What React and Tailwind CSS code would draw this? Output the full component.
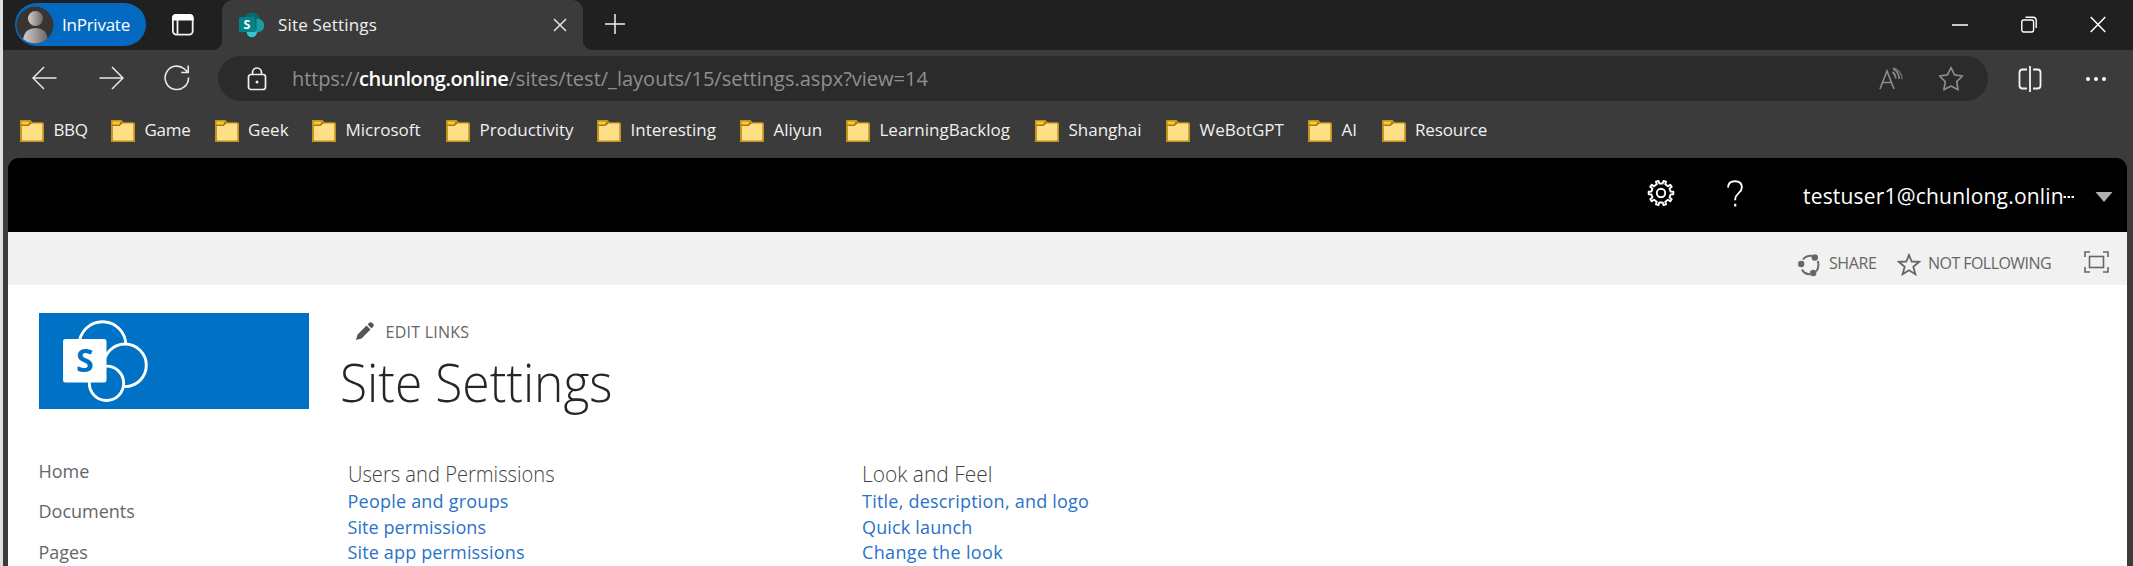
import React from "react";

function Folder() {
  return (
    <svg width="24" height="22" viewBox="0 0 24 22" className="shrink-0">
      <path d="M.7.7h9.600l1.700 2.300h10.300q1 0 1 1v17.300H.7z" fill="#a87a10" stroke="#c4931c" strokeWidth="1.400" />
      <path d="M1.500 1.500h8.200l-1.600 3H1.500z" fill="#f8cb35" />
      <path d="M1.800 6h6.700l3-2.400h10.300q.6 0 .6.600v15.600q0 .6-.6.6h-19.400q-.6 0-.6-.6z" fill="#ffdf85" />
    </svg>
  );
}

function InPrivatePill() {
  return (
    <div className="mt-[3px] ml-[12px] flex h-[43px] w-[131px] items-center rounded-full bg-[#0469c1] pl-px">
      <svg width="38" height="38" viewBox="0 0 38 38" className="shrink-0">
        <defs>
          <linearGradient id="person" x1="0" x2="1" y1="0" y2="0">
            <stop offset="0" stopColor="#d3cfcc" />
            <stop offset="1" stopColor="#6b6664" />
          </linearGradient>
          <clipPath id="avatar">
            <circle cx="19" cy="19" r="18.500" />
          </clipPath>
        </defs>
        <circle cx="19" cy="19" r="18.500" fill="#373432" />
        <g clipPath="url(#avatar)" fill="url(#person)">
          <circle cx="19.500" cy="12.500" r="7.500" />
          <path d="M7 38V33q2-11 12.500-11T32 33v5z" />
        </g>
      </svg>
      <span className="ml-[8px] text-[17px] leading-[22px] font-medium tracking-[-0.25px] text-white">InPrivate</span>
    </div>
  );
}

function TabBar() {
  return (
    <div className="flex h-[50px] shrink-0 bg-[#202020]">
      <InPrivatePill />
      <svg width="24" height="24" viewBox="0 0 24 24" className="mt-[13px] ml-[25px] shrink-0" fill="none" stroke="#f2f2f2" strokeWidth="1.800">
        <rect x="1.900" y="2" width="19.800" height="19.600" rx="3.500" />
        <path d="M1 7.500V5q0-4 4-4h13.600q4 0 4 4v2.500z" fill="#fff" stroke="none" />
        <path d="M6.500 7v14" />
      </svg>
      <div className="ml-[18px] flex w-[9px] items-end bg-[#3b3b3b]">
        <div className="h-full w-full rounded-br-[9px] bg-[#202020]" />
      </div>
      <div className="flex w-[361px] items-center rounded-t-[11px] bg-[#3b3b3b] pl-[17px]">
        <svg width="26" height="26" viewBox="0 0 26 26" className="shrink-0">
          <circle cx="13" cy="8.500" r="8" fill="#036c70" />
          <circle cx="18.500" cy="13.500" r="6.800" fill="#1a9ba1" />
          <circle cx="12.800" cy="20" r="5.200" fill="#37c6d0" />
          <path d="M8 6h9.500v13.500H8z" fill="#024a4d" opacity=".6" />
          <rect x="0" y="5" width="16" height="15" rx="1.300" fill="#038387" />
          <text x="8" y="17" textAnchor="middle" fontSize="12.500" fontWeight="700" fontFamily="Open Sans, sans-serif" fill="#fff">S</text>
        </svg>
        <span className="-mt-px ml-[13px] w-[262px] text-[17px] leading-[22px] tracking-[0.18px] text-[#f0f0f0]">Site Settings</span>
        <svg width="14" height="14" viewBox="0 0 14 14" className="ml-[13px] shrink-0" stroke="#e4e4e4" strokeWidth="1.500">
          <path d="M1 1l12 12M13 1L1 13" />
        </svg>
      </div>
      <div className="flex w-[9px] bg-[#3b3b3b]">
        <div className="h-full w-full rounded-bl-[9px] bg-[#202020]" />
      </div>
      <svg width="22" height="22" viewBox="0 0 22 22" className="mt-[13px] ml-[12px] shrink-0" stroke="#f0f0f0" strokeWidth="1.500">
        <path d="M11 1v20M1 11h20" />
      </svg>
      <div className="mt-[16px] ml-auto flex gap-[53px] pr-[27px]">
        <svg width="16" height="17" viewBox="0 0 16 17" stroke="#fff" strokeWidth="1.500">
          <path d="M0 9h16" />
        </svg>
        <svg width="16" height="17" viewBox="0 0 16 17" fill="none" stroke="#fff" strokeWidth="1.400">
          <rect x=".8" y="4" width="11.800" height="12" rx="2" />
          <path d="M4.500 1.300H12q3.200 0 3.200 3.200V12" />
        </svg>
        <svg width="16" height="17" viewBox="0 0 16 17" stroke="#fff" strokeWidth="1.500">
          <path d="M.7 1l14.600 15M15.300 1L.7 16" />
        </svg>
      </div>
    </div>
  );
}

function AddressRow() {
  return (
    <div className="flex h-[57px] shrink-0 items-center">
      <div className="ml-[29px] flex gap-[42px] text-[#e8e8e8]">
        <svg width="25" height="24" viewBox="0 0 25 24" fill="none" stroke="currentColor" strokeWidth="1.500">
          <path d="M24.500 12H1M12 1L1 12l11 11" />
        </svg>
        <svg width="25" height="24" viewBox="0 0 25 24" fill="none" stroke="currentColor" strokeWidth="1.500">
          <path d="M.5 12H24M13 1l11 11-11 11" />
        </svg>
        <svg width="26" height="26" viewBox="0 0 26 26" className="-ml-[2px] -mt-px" fill="none" stroke="currentColor" strokeWidth="1.600">
          <path d="M24.500 12.500A11.700 11.700 0 1 1 20.500 4L24 7.300M24.200 .5v7h-7" />
        </svg>
      </div>
      <div className="ml-[28px] flex h-[45px] w-[1770px] items-center rounded-full bg-[#2b2b2b]">
        <svg width="20" height="24" viewBox="0 0 20 24" className="ml-[29px] shrink-0" fill="none" stroke="#f0f0f0" strokeWidth="1.700">
          <rect x="1.500" y="7.500" width="17" height="15" rx="2.500" />
          <path d="M5.500 8V5.500a4.500 4.500 0 0 1 9 0V8" />
          <circle cx="10" cy="15" r="1.500" fill="#f0f0f0" stroke="none" />
        </svg>
        <div className="ml-[25px] flex text-[20px] leading-[26px] text-[#8f8f8f]">
          <span className="w-[67px] tracking-[-0.1px]">https://</span>
          <span className="w-[149.500px] font-semibold tracking-[-0.4px] text-white">chunlong.online</span>
          <span className="tracking-[0.01px]">/sites/test/_layouts/15/settings.aspx?view=14</span>
        </div>
        <svg width="24" height="23" viewBox="0 0 24 23" className="ml-auto shrink-0" fill="none" stroke="#8c8c8c" strokeWidth="1.600">
          <path d="M1 22L8 4l7 18M3.500 15.500h9" />
          <path d="M13.500 5q3 2 3.300 6.500M14 1.500q5.800 3 6.300 10.500" />
          <path d="M14.500.8q8 3 8.600 11.500" opacity=".6" />
        </svg>
        <svg width="26" height="25" viewBox="0 0 26 25" className="mr-[24px] ml-[35px] shrink-0" fill="none" stroke="#8c8c8c" strokeWidth="1.700" strokeLinejoin="round">
          <path d="M13 1.500l3.500 7.400 8 1.100-5.800 5.700 1.400 8.100L13 20l-7.100 3.800 1.400-8.100L1.500 10l8-1.100z" />
        </svg>
      </div>
      <svg width="24" height="26" viewBox="0 0 24 26" className="ml-[30px] shrink-0" fill="none" stroke="#f4f4f4" strokeWidth="1.800">
        <path d="M9 3.500H4.500q-3 0-3 3v13q0 3 3 3H9M15 3.500h4.500q3 0 3 3v13q0 3-3 3H15M12 0v26" />
      </svg>
      <svg width="22" height="6" viewBox="0 0 22 6" className="ml-[43px] shrink-0" fill="#fff">
        <circle cx="3" cy="3" r="2" />
        <circle cx="11" cy="3" r="2" />
        <circle cx="19" cy="3" r="2" />
      </svg>
    </div>
  );
}

const bookmarks = [
  ["BBQ", "w-[91px] tracking-[-0.4px]"],
  ["Game", "w-[103.5px] tracking-[-0.25px]"],
  ["Geek", "w-[97.5px] tracking-[0.1px]"],
  ["Microsoft", "w-[134px]"],
  ["Productivity", "w-[151px]"],
  ["Interesting", "w-[143px]"],
  ["Aliyun", "w-[106px]"],
  ["LearningBacklog", "w-[189px]"],
  ["Shanghai", "w-[131px]"],
  ["WeBotGPT", "w-[142px]"],
  ["AI", "w-[73.5px]"],
  ["Resource", "w-[110px] tracking-[-0.15px]"],
];

function BookmarkBar() {
  return (
    <div className="flex h-[51px] shrink-0 pt-[13px] pl-[17px] text-[17px] leading-[22px] text-[#f0f0f0]">
      {bookmarks.map(([name, cls]) => (
        <div key={name} className={"flex shrink-0 items-start gap-[9.5px] " + cls}>
          <Folder />
          <span className="-mt-px">{name}</span>
        </div>
      ))}
    </div>
  );
}

const GEAR_TEETH = 10;
const gearPath =
  Array.from({ length: GEAR_TEETH }, (_, i) => {
    const point = (r, offset) => {
      const a = ((i + offset) * 2 * Math.PI) / GEAR_TEETH;
      return (14 + r * Math.sin(a)).toFixed(2) + " " + (14 - r * Math.cos(a)).toFixed(2);
    };
    return [point(9.7, 0.28), point(12.4, 0.33), point(12.4, 0.67), point(9.7, 0.72)]
      .map((p, j) => (i === 0 && j === 0 ? "M" : "L") + p)
      .join("");
  }).join("") + "Z";

function SuiteBar() {
  return (
    <div className="flex h-[74px] shrink-0 items-center justify-end rounded-t-[11px] bg-black text-white">
      <svg width="28" height="28" viewBox="0 0 28 28" className="-mt-[4px] shrink-0" fill="none" stroke="#fff" strokeWidth="1.900" strokeLinejoin="round">
        <path d={gearPath} />
        <circle cx="14" cy="14" r="4.200" />
      </svg>
      <svg width="16" height="27" viewBox="0 0 16 27" className="-mt-[4px] ml-[52px] shrink-0" fill="none" stroke="#fff" strokeWidth="1.900">
        <path d="M1 7.500Q1.200 1.200 8 1.200t6.900 6.100c0 5.700-6.700 6-6.700 12v1" />
        <path d="M8.200 23.800v2.700" strokeWidth="2.200" />
      </svg>
      <span className="mt-px ml-[60.500px] w-[260px] text-[21px] leading-[28px] tracking-[0.19px]">testuser1@chunlong.onlin</span>
      <svg width="12" height="4" viewBox="0 0 12 4" className="mt-[3px] shrink-0" fill="#fff">
        <path d="M.5 1h2.500v2H.5zM4.500 1H7v2H4.500zM8.500 1H11v2H8.500z" />
      </svg>
      <svg width="18" height="10" viewBox="0 0 18 10" className="mt-[4px] mr-[14px] ml-[20px] shrink-0" fill="#b0b0b0">
        <path d="M.5 0h17L9 10z" />
      </svg>
    </div>
  );
}

function RibbonRow() {
  return (
    <div className="flex h-[53px] shrink-0 items-center justify-end bg-[#f1f1f1] pt-[12px] text-[16px] leading-[22px] text-[#666]">
      <svg width="22" height="24" viewBox="0 0 22 24" className="shrink-0" fill="none" stroke="#6a6a6a" strokeWidth="2">
        <path d="M5 6.500Q8 2.500 14 2.800M19.700 8q2 5.500-1.500 10.500M12 21.300Q6 21 4 16.500" />
        <g fill="#666" stroke="none">
          <circle cx="16.800" cy="4.500" r="3.200" />
          <circle cx="3.200" cy="11" r="3.200" />
          <circle cx="15.200" cy="20" r="3.200" />
        </g>
      </svg>
      <span className="-mt-[4px] ml-[9px] w-[48px] tracking-[-0.4px]">SHARE</span>
      <svg width="24" height="23" viewBox="0 0 24 23" className="ml-[20px] shrink-0" fill="none" stroke="#666" strokeWidth="1.800">
        <path d="M12 2l2.700 6.500 7.500.3-5.900 4.900 2.100 7.500L12 17.200 5.600 21.200l2.100-7.500L1.800 8.800l7.500-.3z" />
      </svg>
      <span className="-mt-[4px] ml-[7px] w-[124px] tracking-[-0.55px]">NOT FOLLOWING</span>
      <svg width="25" height="22" viewBox="0 0 25 22" className="-mt-[6px] mr-[18px] ml-[32px] shrink-0" fill="none" stroke="#666" strokeWidth="1.600">
        <path d="M1 6V1h5M19 1h5v5M24 16v5h-5M6 21H1v-5" />
        <rect x="5.500" y="5.500" width="14" height="11" />
      </svg>
    </div>
  );
}

function SiteLogo() {
  return (
    <div className="h-[96px] w-[270px] bg-[#0072c6]">
      <svg width="110" height="96" viewBox="0 0 110 96" fill="none" stroke="#fff" strokeWidth="2.900">
        <circle cx="63.500" cy="32" r="23.300" />
        <circle cx="86" cy="52.300" r="21.300" fill="#0072c6" />
        <circle cx="67.500" cy="70.300" r="17.200" fill="#0072c6" />
        <rect x="24" y="26" width="43.500" height="43.500" rx="2.500" fill="#fff" stroke="none" />
        <text x="45.700" y="59.300" textAnchor="middle" fontSize="32" fontWeight="700" fontFamily="Open Sans, sans-serif" fill="#0072c6" stroke="none">S</text>
      </svg>
    </div>
  );
}

function LinkGroup({ title, links, titleClass }) {
  return (
    <section>
      <h2 className={"w-max origin-left text-[22.5px] leading-[30px] font-light text-[#444] " + titleClass}>{title}</h2>
      <ul className="text-[18px] leading-[25.6px] text-[#2a72c8]">
        {links.map(([label, cls]) => (
          <li key={label} className={"whitespace-nowrap " + cls}>
            {label}
          </li>
        ))}
      </ul>
    </section>
  );
}

export default function App() {
  return (
    <div className="flex h-[566px] w-[2133px] overflow-hidden border-l-[3px] border-[#dedede] bg-[#3b3b3b] font-['Open_Sans',sans-serif]">
      <div className="flex w-[2130px] flex-col">
        <TabBar />
        <AddressRow />
        <BookmarkBar />
        <div className="mr-[6px] ml-[5px] flex grow flex-col">
          <SuiteBar />
          <RibbonRow />
          <main className="flex h-[281px] bg-white pl-[30.500px]">
            <aside className="w-[301px] shrink-0 pt-[28px]">
              <SiteLogo />
              <nav className="mt-[42px] text-[18px] leading-[40.4px] text-[#666]">
                <div>Home</div>
                <div>Documents</div>
                <div>Pages</div>
              </nav>
            </aside>
            <div className="pt-[35px]">
              <div className="flex h-[24px] items-center text-[16px] leading-[22px] text-[#666]">
                <svg width="18" height="18" viewBox="0 0 18 18" className="ml-[16px] -mt-[3px]" fill="#555">
                  <path d="M0 18l1.500-5.500L10.500 3.500l4 4L5.500 16.500zM11.600 2.400L13.500.6q1.200-1 2.500.2l1.300 1.300q1 1.200 0 2.400l-1.700 1.900z" />
                </svg>
                <span className="ml-[12px] tracking-[0.25px]">EDIT LINKS</span>
              </div>
              <h1 className="w-max origin-left scale-x-[0.938] text-[53px] leading-[76px] font-light text-[#262626]">Site Settings</h1>
              <div className="mt-[39px] flex pl-[8px]">
                <div className="w-[514.500px] shrink-0">
                  <LinkGroup
                    title="Users and Permissions"
                    titleClass="scale-x-[0.895]"
                    links={[
                      ["People and groups", "tracking-[0.22px]"],
                      ["Site permissions", "tracking-[0.07px]"],
                      ["Site app permissions", "tracking-[0.15px]"],
                    ]}
                  />
                </div>
                <LinkGroup
                  title="Look and Feel"
                  titleClass="scale-x-[0.93]"
                  links={[
                    ["Title, description, and logo", "tracking-[0.22px]"],
                    ["Quick launch", "tracking-[0.16px]"],
                    ["Change the look", "tracking-[0.34px]"],
                  ]}
                />
              </div>
            </div>
          </main>
        </div>
      </div>
    </div>
  );
}
